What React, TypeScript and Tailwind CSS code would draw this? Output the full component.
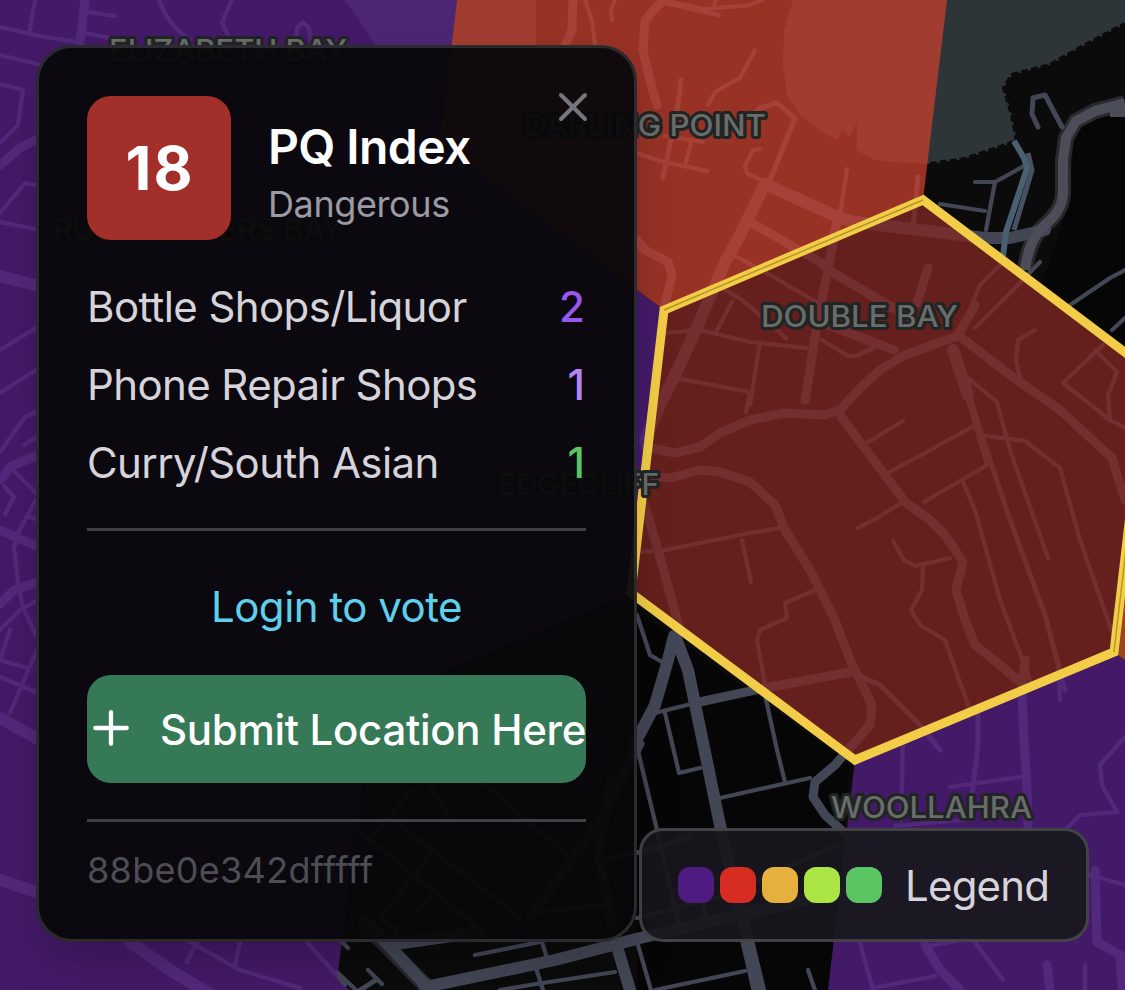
import { Plus, X } from "lucide-react";

type Road = { width: number; points: string[] };

const roads: Road[] = [
  {
    width: 4.2,
    points: [
      // west
      "35,0 30,30",
      "0,27 45,37 78,42",
      "88,12 115,16",
      "86,33 120,40",
      "159,0 166,15 175,28 190,40",
      "232,0 222,22 230,40",
      "296,42 297,28 303,22 309,28 311,42",
      "0,55 45,66",
      "0,84 23,90 18,125 0,143",
      "0,213 25,183 40,186",
      "0,222 40,230",
      "0,350 36,328",
      "0,393 36,370",
      "0,452 25,417 38,411",
      "24,445 38,436",
      "4,486 14,497 5,514",
      "15,472 36,493",
      "36,500 17,535 14,548 18,582 23,608 36,635",
      "28,516 38,520",
      "0,630 20,610 38,600",
      "0,660 10,630",
      "0,660 27,668",
      "0,677 36,692",
      "10,713 36,652",
      "190,942 240,970 300,988",
      "197,942 187,962",
      "240,942 235,965",
      "307,942 345,985",
      // darling point
      "585,0 592,20 595,45",
      "615,0 611,10 612,20",
      "660,2 719,15",
      "662,0 705,9 750,5 762,0",
      "716,0 714,6",
      "755,50 740,78 715,92 708,105",
      "637,153 660,161 707,171",
      "692,140 685,165",
      "665,136 703,142",
      "735,256 770,275 820,304",
      "847,169 840,215",
      "760,149 753,150 745,166 747,173 765,182",
      // double bay
      "975,182 995,182 1024,166",
      "995,182 986,230",
      "940,204 985,211",
      "1070,305 1110,278 1125,270",
      "1112,330 1125,318",
      "1000,265 980,285 965,320 958,332",
      "1040,262 1015,288 975,328",
      "722,288 742,300 768,322 786,338",
      "732,302 717,330",
      "665,333 700,330 750,342 806,348",
      "760,342 750,405",
      "822,340 848,356 857,356 875,347",
      "868,442 903,421",
      "890,472 972,427",
      "968,400 987,465 924,502",
      "903,502 877,518 858,528",
      "893,541 904,560 915,566 950,558",
      "923,565 922,590 911,610 920,625 945,640 955,668",
      "963,482 975,510 1000,600 1030,680",
      "968,378 997,402 1010,450 1048,558",
      "980,435 1025,441 1060,468 1080,540 1112,632",
      "1035,330 1018,340 1016,360 1022,385",
      "1103,345 1063,383 1110,420 1125,428",
      "1095,350 1117,372 1108,395 1110,420",
      "675,378 750,392 746,412",
      "640,552 665,550 750,533 780,528",
      "742,540 751,582",
      "815,590 785,603 787,618 760,630 757,640 766,690",
      "950,655 970,710",
      // woollahra
      "950,787 1020,777",
      "903,740 901,820",
      "895,826 965,820",
      "1125,737 1100,765 1102,785 1117,812 1080,815 1065,830",
      "1058,660 1060,700",
      "1090,875 1125,885",
      "860,942 873,990",
      "873,988 935,976",
      "975,942 1003,980",
      "930,946 970,938",
      "1085,965 1085,990",
      // south
      "765,695 777,750 785,782",
      "665,713 679,773 700,768",
      "637,747 657,830 680,930",
      "720,798 810,778",
      "637,615 650,655 662,662",
      "655,713 695,703",
      "637,853 690,837",
      "637,918 720,897 838,845",
      "703,905 706,925",
      "475,955 540,942",
      "542,942 547,958",
      "536,968 543,990",
      "638,945 651,990",
      "500,990 536,984 615,972",
      "655,990 745,971",
      "808,970 815,990",
      "337,972 356,990",
      "342,942 348,948",
      "368,970 382,984",
      // under the card
      "412,790 370,840",
      "355,828 475,925",
      "430,784 448,815",
      "400,825 520,918",
      "480,780 570,858",
      "430,855 380,918 396,928 396,940",
      "430,896 414,914",
      "540,912 605,905",
      "600,860 660,848",
    ],
  },
  {
    width: 5,
    points: [
      "681,80 678,105 663,178",
      "750,118 760,108 777,103 795,118 770,180",
      "918,177 913,228",
      "860,676 880,685 900,705 920,725 940,750",
      "968,390 980,430 1010,520 1045,615 1065,690",
      "978,715 978,745 972,795",
      "1038,127 1032,114 1033,98 1045,95 1062,127",
      "360,990 376,980",
    ],
  },
  {
    width: 9,
    points: [
      "85,0 79,50",
      "0,165 20,148 40,138",
      "0,480 12,466 38,455",
      "0,530 36,546",
      "0,604 14,590 38,582",
      "573,0 572,30 565,46",
      "663,0 645,20 643,50 650,80 657,105",
      "637,240 645,250 668,262 672,275 664,308",
      "750,222 820,262 835,274 900,312",
      "820,322 894,350",
      "838,215 828,270 817,325 805,400",
      "928,268 917,303",
      "960,335 905,355 880,370 860,388 840,410 825,415 785,413 750,420 720,433 700,447 675,453 645,447",
      "840,415 862,445 885,475 905,502 930,520 945,535 963,562 956,590 965,620 975,645 1000,665 1020,682",
      "975,305 958,335 1010,375 1060,410 1112,458 1125,500",
      "640,475 670,478 700,470 720,472 750,482 775,505 785,530 810,570 835,620 850,660 872,705 870,725 855,742 835,765 815,782 813,797 825,815 850,838 930,860",
      "645,505 665,575 680,630",
      "695,703 765,688 850,672",
      "1025,660 1022,690 1024,740 1027,790 1028,830",
      "925,945 940,970 960,990",
      "1095,870 1097,942 1120,955 1122,990",
      "1047,965 1050,990",
      "745,942 756,990",
      "640,744 600,820 530,918",
      "612,780 598,850 612,925",
    ],
  },
  {
    width: 12,
    points: [
      "0,276 38,286",
      "0,718 36,738",
      "0,880 36,892",
      "130,942 170,970 220,1000",
      "765,184 840,218 855,222 912,229 985,238 1010,238 1045,230",
      "765,184 740,235 725,262 698,325 675,375 660,405 645,440",
      "953,350 968,395",
      "674,636 668,660 655,705 634,745",
      "675,636 688,670 720,825 760,990",
      "425,987 555,960 640,938 760,910 850,890",
      "395,944 480,932",
      "618,950 630,990",
      "365,920 432,992",
    ],
  },
];

const labels = [
  { text: "ELIZABETH BAY", x: 109, y: 61, width: 238 },
  { text: "DARLING POINT", x: 524, y: 136, width: 242 },
  { text: "RUSHCUTTERS BAY", x: 53, y: 240, width: 290 },
  { text: "DOUBLE BAY", x: 761, y: 327, width: 197 },
  { text: "EDGECLIFF", x: 498, y: 495, width: 161 },
  { text: "WOOLLAHRA", x: 831, y: 818, width: 201 },
];

const stats = [
  { label: "Bottle Shops/Liquor", value: 2, color: "text-[#9a56f0]" },
  { label: "Phone Repair Shops", value: 1, color: "text-[#b682f5]" },
  { label: "Curry/South Asian", value: 1, color: "text-[#5ac562]" },
];

const legendColors = [
  "bg-[#4f1b82]",
  "bg-[#d62c22]",
  "bg-[#e6b03f]",
  "bg-[#aae544]",
  "bg-[#5ac562]",
];

function MapCanvas() {
  return (
    <svg
      className="absolute inset-0"
      width="1125"
      height="990"
      viewBox="0 0 1125 990"
      fill="none"
    >
      <rect width="1125" height="990" fill="#0b0b0b" />
      <path
        d="M1075 125 1125 112V360L1040 290 1070 200Z M637 610 850 765 830 990H637Z"
        fill="#060606"
      />

      {/* harbour */}
      <path
        d="M793 0 784 30 783 65 787 95 800 115 825 134 838 140 842 130 850 137 857 122 857 150 872 159 890 162 930 164 965 159 1000 147 1017 141 1012 115 1004 88 1012 75 1050 65 1085 45 1125 24V0Z"
        fill="#2e3539"
      />
      <path
        d="M930 164 965 159 1000 147 1017 141 1012 115 1004 88 1012 75 1050 65 1085 45 1125 24"
        stroke="#0b0b0b"
        strokeWidth="4"
        strokeDasharray="7 3"
      />
      <path d="M344 0H536V45H375L358 18Z" fill="#2e3539" />

      {/* streets */}
      <path
        d="M1125 103 1095 111 1076 121 1066 138 1063 160V195Q1061 212 1045 225T1025 270M363 922 432 992"
        stroke="#29292e"
        strokeWidth="16"
      />
      {roads.map((road) => (
        <g
          key={road.width}
          stroke="#434655"
          strokeWidth={road.width}
          strokeLinecap="round"
          strokeLinejoin="round"
        >
          {road.points.map((points) => (
            <polyline key={points} points={points} />
          ))}
        </g>
      ))}
      <path
        d="M1125 103 1095 111 1076 121 1066 138 1063 160V195Q1061 212 1045 225T1025 270M1110 112H1125"
        stroke="#4d4c59"
        strokeWidth="10"
      />
      <path d="M1028 153 1032 170 1014 230" stroke="#475163" strokeWidth="5" />
      <path
        d="M1014 141 1024 158 1027 168 1015 205 1006 232 1003 256"
        stroke="#496071"
        strokeWidth="6"
      />

      {/* hex cells */}
      <g opacity="0.75">
        <path
          d="M0 0H457L440 143 664 310 631 593 372 701 337 980 350 990H0Z"
          fill="#572087"
        />
        <path d="M855 760 1114 652 1147 677V990H828Z" fill="#572087" />
        <path d="M457 0 440 143 664 310 923 200 947 0Z" fill="#c6402e" />
        <path d="M1114 652 1147 369V677Z" fill="#c65a26" />
        <path
          d="M923 200 664 310 631 593 855 760 1114 652 1147 369Z"
          fill="#842724"
        />
      </g>
      <path
        d="M923 200 664 310 631 593 855 760 1114 652 1147 369Z"
        stroke="#f3cd47"
        strokeWidth="9"
      />
      <path
        d="M664 310 923 200M1114 652 1147 369"
        stroke="#b49527"
        strokeWidth="1.4"
      />

      {labels.map((label) => (
        <text
          key={label.text}
          x={label.x}
          y={label.y}
          textLength={label.width}
          lengthAdjust="spacingAndGlyphs"
          fontFamily="Inter, sans-serif"
          fontSize="29.5"
          fontWeight="450"
          fill="#696c6a"
          stroke="#202423"
          strokeWidth="6"
          strokeLinejoin="round"
          paintOrder="stroke"
        >
          {label.text}
        </text>
      ))}
    </svg>
  );
}

function CellCard() {
  return (
    <section className="relative h-[897px] w-[601px] rounded-[36px] border-3 border-[#2b2a2e] bg-[#08080b]/95 p-12 shadow-2xl">
      <button className="absolute top-[35px] right-[37px]" aria-label="Close">
        <X size={48} strokeWidth={2} className="text-[#77757e]" />
      </button>

      <div className="flex items-center gap-[37px]">
        <div className="flex size-36 items-center justify-center rounded-3xl bg-[#a32f2b] pl-0.5 text-[60px] font-bold tracking-[2px] text-white">
          18
        </div>
        <div className="pt-1.5">
          <h2 className="text-[48px] leading-[66px] font-semibold tracking-[-0.6px] text-white">
            PQ Index
          </h2>
          <p className="text-[36px] leading-12 tracking-[-0.4px] text-[#9c9aa2]">
            Dangerous
          </p>
        </div>
      </div>

      <dl className="mt-[37px] flex flex-col gap-[18px] text-[42px] leading-[60px]">
        {stats.map((stat) => (
          <div key={stat.label} className="flex justify-between">
            <dt className="tracking-[-0.6px] text-[#d6d4da]">{stat.label}</dt>
            <dd className={`pr-px font-medium ${stat.color}`}>{stat.value}</dd>
          </div>
        ))}
      </dl>

      <div className="mt-[35px] border-t-3 border-[#414044] pt-[46px]">
        <button className="block w-full text-center text-[42px] leading-[60px] tracking-[-0.5px] text-[#5fd0ec]">
          Login to vote
        </button>
        <button className="mt-[38px] flex h-[108px] w-full items-center justify-center rounded-3xl bg-[#367957] text-[42px] font-medium tracking-[-0.3px] whitespace-nowrap text-white">
          <Plus
            size={54}
            strokeWidth={1.9}
            className="mr-[22px] -ml-[3px] shrink-0 -translate-y-px"
          />
          Submit Location Here
        </button>
      </div>

      <p className="mt-9 border-t-3 border-[#414044] pt-6 text-[36px] leading-12 tracking-[0.3px] text-[#4e4c54]">
        88be0e342dfffff
      </p>
    </section>
  );
}

function Legend() {
  return (
    <button className="flex h-[114px] w-[450px] items-center rounded-3xl border-3 border-[#434247] bg-[#18171d]/92 pl-9 text-[42px] tracking-[-0.8px] text-[#d6d4da]">
      <span className="mr-[23px] flex gap-1.5">
        {legendColors.map((color) => (
          <span key={color} className={`size-9 rounded-xl ${color}`} />
        ))}
      </span>
      Legend
    </button>
  );
}

function App() {
  return (
    <div className="relative h-[990px] w-[1125px] overflow-hidden font-[Inter,sans-serif]">
      <MapCanvas />
      <main className="relative flex items-end gap-0.5 pt-[45px] pl-9">
        <CellCard />
        <Legend />
      </main>
    </div>
  );
}

export default App;
